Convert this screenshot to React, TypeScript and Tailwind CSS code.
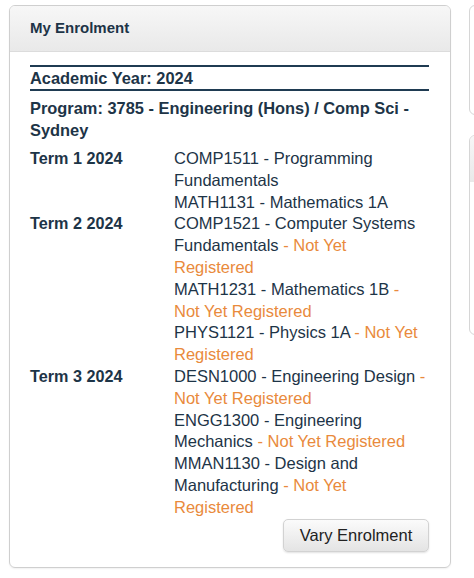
import React from "react";

type Course = { text: string; pending?: boolean };
const terms: { name: string; courses: Course[] }[] = [
  {
    name: "Term 1 2024",
    courses: [
      { text: "COMP1511 - Programming Fundamentals" },
      { text: "MATH1131 - Mathematics 1A" },
    ],
  },
  {
    name: "Term 2 2024",
    courses: [
      { text: "COMP1521 - Computer Systems Fundamentals", pending: true },
      { text: "MATH1231 - Mathematics 1B", pending: true },
      { text: "PHYS1121 - Physics 1A", pending: true },
    ],
  },
  {
    name: "Term 3 2024",
    courses: [
      { text: "DESN1000 - Engineering Design", pending: true },
      { text: "ENGG1300 - Engineering Mechanics", pending: true },
      { text: "MMAN1130 - Design and Manufacturing", pending: true },
    ],
  },
];

export default function App() {
  return (
    <div
      className="w-[474px] h-[578px] overflow-hidden bg-white flex items-start text-[#1d3447]"
      style={{ fontFamily: '"Liberation Sans", Arial, Helvetica, sans-serif' }}
    >
      <div className="ml-[9px] mt-[5px] w-[442px] shrink-0 border border-[#cfcfcf] rounded-[6px] overflow-hidden shadow-[0_1px_2px_rgba(0,0,0,0.06)]">
        <div className="h-[46px] bg-gradient-to-b from-[#f7f7f7] to-[#e9e9e9] border-b border-[#dcdcdc] flex items-center pl-[20px]">
          <span className="text-[15px] font-bold">My Enrolment</span>
        </div>
        <div className="pl-[20px] pr-[21px] pt-[13px] pb-[15px]">
          <div className="border-t-2 border-b-2 border-[#1f3b52] leading-[22px] text-[16.4px] font-bold">
            Academic Year: 2024
          </div>
          <div className="mt-[6px] leading-[22px] text-[16.4px] font-bold">
            Program: 3785 - Engineering (Hons) / Comp Sci - Sydney
          </div>
          <div className="mt-[7px] flex flex-col">
            {terms.map((t) => (
              <div key={t.name} className="flex text-[16.5px] leading-[21.8px]">
                <div className="w-[144px] shrink-0 font-bold text-[16.2px]">{t.name}</div>
                <div className="flex-1 flex flex-col">
                  {t.courses.map((c) => (
                    <div key={c.text}>
                      {c.text}
                      {c.pending && (
                        <span className="text-[#e98a3c]"> - Not Yet Registered</span>
                      )}
                    </div>
                  ))}
                </div>
              </div>
            ))}
          </div>
          <div className="flex justify-end">
            <button className="w-[146px] h-[33px] rounded-[5px] border border-[#d2d2d2] bg-gradient-to-b from-[#fbfbfb] to-[#e4e4e4] shadow-[0_1px_2px_rgba(0,0,0,0.12)] text-[16.5px] text-[#222]">
              Vary Enrolment
            </button>
          </div>
        </div>
      </div>
      <div className="ml-[18px] mt-[5px] w-[40px] shrink-0 flex flex-col gap-[20px]">
        <div className="h-[110px] border border-[#d6d6d6] rounded-[6px] bg-white"></div>
        <div className="h-[200px] border border-[#d6d6d6] rounded-[6px] overflow-hidden">
          <div className="h-[46px] bg-gradient-to-b from-[#f7f7f7] to-[#e9e9e9]"></div>
        </div>
      </div>
    </div>
  );
}
